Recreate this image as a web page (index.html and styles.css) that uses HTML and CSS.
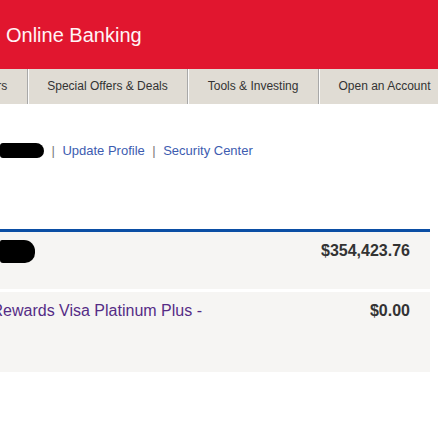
FILE: index.html
```html
<!DOCTYPE html>
<html lang="en">
<head>
<meta charset="utf-8">
<title>Online Banking</title>
<link rel="stylesheet" href="styles.css">
</head>
<body>
<header class="masthead">
  <h1 class="title">Online Banking</h1>
</header>
<nav class="mainnav">
  <a class="navitem first" href="#">Transfers</a>
  <a class="navitem" href="#">Special Offers &amp; Deals</a>
  <a class="navitem" href="#">Tools &amp; Investing</a>
  <a class="navitem" href="#">Open an Account</a>
  <a class="navitem" href="#">Help &amp; Support</a>
</nav>
<div class="subnav">
  <span class="redact redact-name"></span><span class="pipe">|</span><a class="sublink" href="#">Update Profile</a><span class="pipe">|</span><a class="sublink" href="#">Security Center</a>
</div>
<section class="accounts">
  <div class="row row-short">
    <span class="redact redact-acct"></span>
    <span class="amount">$354,423.76</span>
  </div>
  <div class="row row-tall">
    <a class="acctname" href="#">Rewards Visa Platinum Plus -</a>
    <span class="amount">$0.00</span>
  </div>
</section>
</body>
</html>
```
FILE: styles.css
```css
html, body {
  margin: 0;
  padding: 0;
  background: #fff;
  overflow: hidden;
}
body {
  font-family: "Liberation Sans", Arial, sans-serif;
  width: 438px;
}
.masthead {
  height: 69px;
  background: #e1162f;
  box-sizing: border-box;
  padding: 24px 0 0 6px;
}
.title {
  margin: 0;
  font-size: 20px;
  line-height: 23px;
  font-weight: normal;
  color: #fff4f6;
}
.mainnav {
  display: flex;
  height: 35px;
  background: #e0dcd4;
  overflow: hidden;
  white-space: nowrap;
}
.navitem {
  flex: none;
  padding: 0 19.5px;
  font-size: 12px;
  line-height: 35px;
  color: #333;
  text-decoration: none;
}
.navitem + .navitem {
  border-left: 1px solid #a8a8a8;
  box-shadow: inset 1px 0 0 #fbfbfb;
}
.navitem.first {
  margin-left: -62.5px;
}
.subnav {
  display: flex;
  align-items: center;
  height: 15px;
  margin-top: 39px;
  font-size: 13px;
  line-height: 15px;
  white-space: nowrap;
}
.redact {
  display: inline-block;
  background: #000;
  flex: none;
}
.redact-name {
  width: 44px;
  height: 15px;
  margin-top: -1px;
  border-radius: 3px 8px 7px 3px;
}
.pipe {
  color: #7a7a7a;
  margin: 0 7.5px;
}
.sublink {
  color: #3d5cb0;
  text-decoration: none;
}
.accounts {
  width: 430px;
  margin-top: 71px;
  border-top: 3px solid #0b4ea4;
}
.row {
  display: flex;
  justify-content: space-between;
  align-items: flex-start;
  background: #f6f5f3;
  box-sizing: border-box;
  padding: 10px 20px 0 0;
}
.row + .row {
  margin-top: 3px;
}
.row-short {
  height: 57px;
}
.row-tall {
  height: 80px;
}
.redact-acct {
  width: 35px;
  height: 23px;
  margin-top: -2px;
  border-radius: 2px 11px 10px 3px;
}
.amount {
  font-size: 16px;
  line-height: 18px;
  font-weight: bold;
  color: #333;
}
.acctname {
  margin-left: -8.5px;
  font-size: 16px;
  line-height: 18px;
  color: #552c86;
  text-decoration: none;
}
```
